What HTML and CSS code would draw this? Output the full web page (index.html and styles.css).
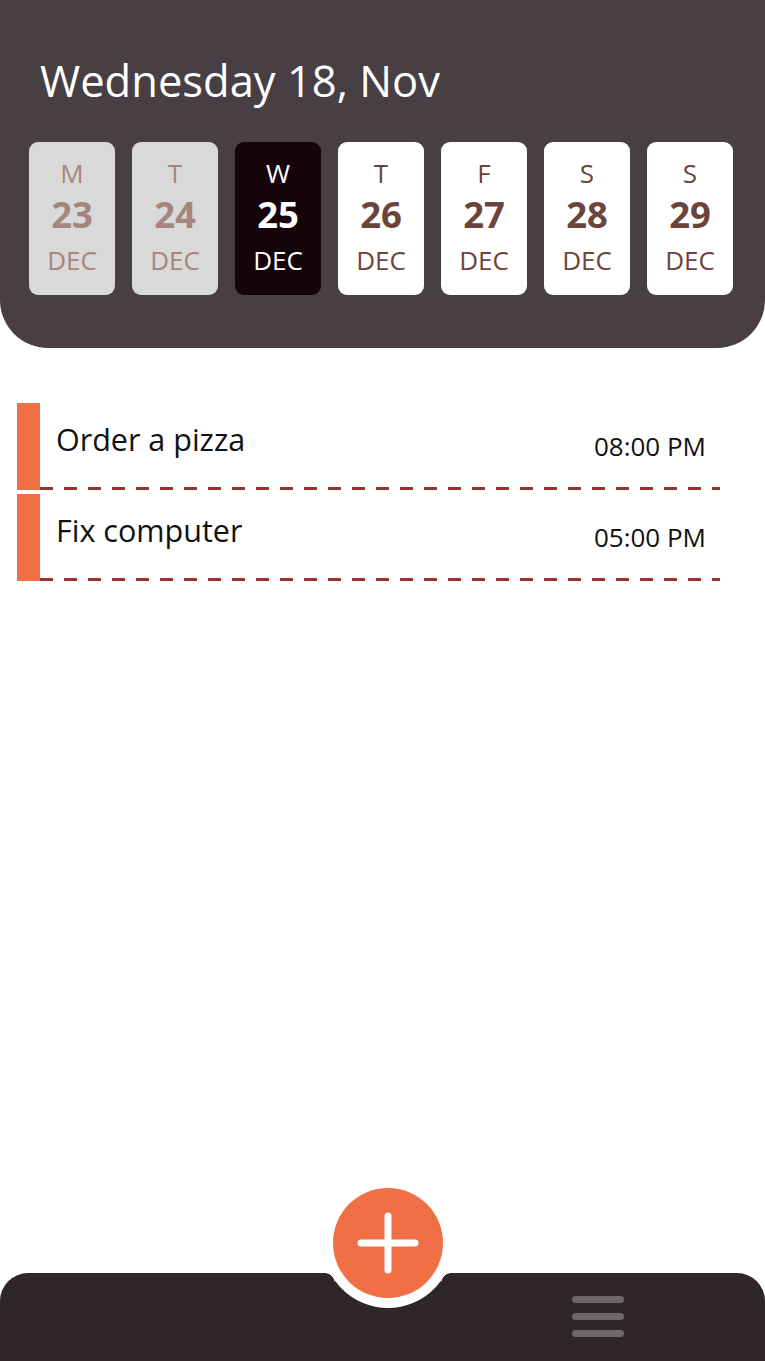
FILE: index.html
```html
<!DOCTYPE html>
<html lang="en">
<head>
<meta charset="utf-8">
<title>Tasks</title>
<link rel="stylesheet" href="styles.css">
</head>
<body>
<div class="app">
  <header class="header">
    <h1 class="title">Wednesday 18, Nov</h1>
    <div class="days">
      <div class="day past"><span class="dow">M</span><span class="num">23</span><span class="mon">DEC</span></div>
      <div class="day past"><span class="dow">T</span><span class="num">24</span><span class="mon">DEC</span></div>
      <div class="day active"><span class="dow">W</span><span class="num">25</span><span class="mon">DEC</span></div>
      <div class="day"><span class="dow">T</span><span class="num">26</span><span class="mon">DEC</span></div>
      <div class="day"><span class="dow">F</span><span class="num">27</span><span class="mon">DEC</span></div>
      <div class="day"><span class="dow">S</span><span class="num">28</span><span class="mon">DEC</span></div>
      <div class="day"><span class="dow">S</span><span class="num">29</span><span class="mon">DEC</span></div>
    </div>
  </header>

  <main class="tasks">
    <div class="task">
      <div class="task-bar"></div>
      <div class="task-body">
        <span class="task-name">Order a pizza</span>
        <span class="task-time">08:00 PM</span>
      </div>
    </div>
    <div class="task">
      <div class="task-bar"></div>
      <div class="task-body">
        <span class="task-name">Fix computer</span>
        <span class="task-time">05:00 PM</span>
      </div>
    </div>
  </main>

  <footer class="footer">
    <div class="notch"></div>
    <div class="fillet fillet-left"></div>
    <div class="fillet fillet-right"></div>
    <button class="fab" aria-label="Add">
      <svg width="62" height="62" viewBox="0 0 62 62"><path d="M31 4V58M4 31H58" stroke="#fff" stroke-width="7" stroke-linecap="round" fill="none"/></svg>
    </button>
    <div class="menu">
      <span></span><span></span><span></span>
    </div>
  </footer>
</div>
</body>
</html>
```
FILE: styles.css
```css
* { box-sizing: border-box; }
html, body { margin: 0; padding: 0; background: #fff; }
body { font-family: "Open Sans", "Noto Sans", sans-serif; }
.app {
  width: 765px;
  height: 1361px;
  display: flex;
  flex-direction: column;
  overflow: hidden;
}
.header {
  background: #483f44;
  height: 348px;
  border-radius: 0 0 48px 48px;
  padding: 52px 32px 0 29px;
  flex: none;
}
.title {
  margin: 0 0 0 11px;
  color: #fff;
  font-weight: 400;
  font-size: 43.5px;
  line-height: 58px;
  letter-spacing: 0;
}
.days {
  margin-top: 32px;
  display: flex;
  justify-content: space-between;
}
.day {
  width: 86px;
  height: 153px;
  border-radius: 9px;
  background: #fff;
  color: #6b443b;
  display: flex;
  flex-direction: column;
  align-items: center;
  padding-top: 13px;
}
.day.past { background: #d9d9d9; color: #a5867f; }
.day.active { background: #15040a; color: #fff; }
.dow { font-size: 26px; line-height: 36px; }
.num { font-size: 36.5px; line-height: 46px; font-weight: 700; }
.mon { font-size: 26px; line-height: 47px; }

.tasks {
  flex: 1;
  padding: 55px 45px 0 17px;
  display: flex;
  flex-direction: column;
  gap: 4px;
}
.task { display: flex; height: 87px; }
.task-bar { width: 23px; background: #f06f45; flex: none; }
.task-body {
  flex: 1;
  display: flex;
  justify-content: space-between;
  align-items: flex-start;
  padding: 15px 14px 0 16px;
  background: repeating-linear-gradient(to right, #9b3131 0 13px, transparent 13px 24px) left bottom / 100% 3px no-repeat;
}
.task-name { font-size: 30.5px; line-height: 42px; color: #111; }
.task-time { font-size: 26px; line-height: 40px; color: #111; padding-top: 8px; }

.footer {
  position: relative;
  height: 88px;
  flex: none;
  background: #2e2629;
  border-radius: 28px 28px 0 0;
  display: flex;
  justify-content: flex-end;
  align-items: center;
  padding-right: 141px;
}
.notch {
  position: absolute;
  left: 323px;
  top: -95px;
  width: 130px;
  height: 130px;
  border-radius: 50%;
  background: #fff;
}
.fillet {
  position: absolute;
  top: 0;
  width: 10px;
  height: 10px;
}
.fillet-left {
  left: 324.6px;
  background: radial-gradient(circle at 0 100%, transparent 9.5px, #fff 10px);
}
.fillet-right {
  left: 441.4px;
  background: radial-gradient(circle at 100% 100%, transparent 9.5px, #fff 10px);
}
.fab {
  position: absolute;
  left: 333px;
  top: -85px;
  width: 110px;
  height: 110px;
  border-radius: 50%;
  border: none;
  padding: 0;
  background: #f06f45;
  display: flex;
  align-items: center;
  justify-content: center;
}
.menu {
  display: flex;
  flex-direction: column;
  gap: 10px;
  margin-top: -1px;
}
.menu span {
  display: block;
  width: 52px;
  height: 7px;
  border-radius: 4px;
  background: #6e6869;
}
```
